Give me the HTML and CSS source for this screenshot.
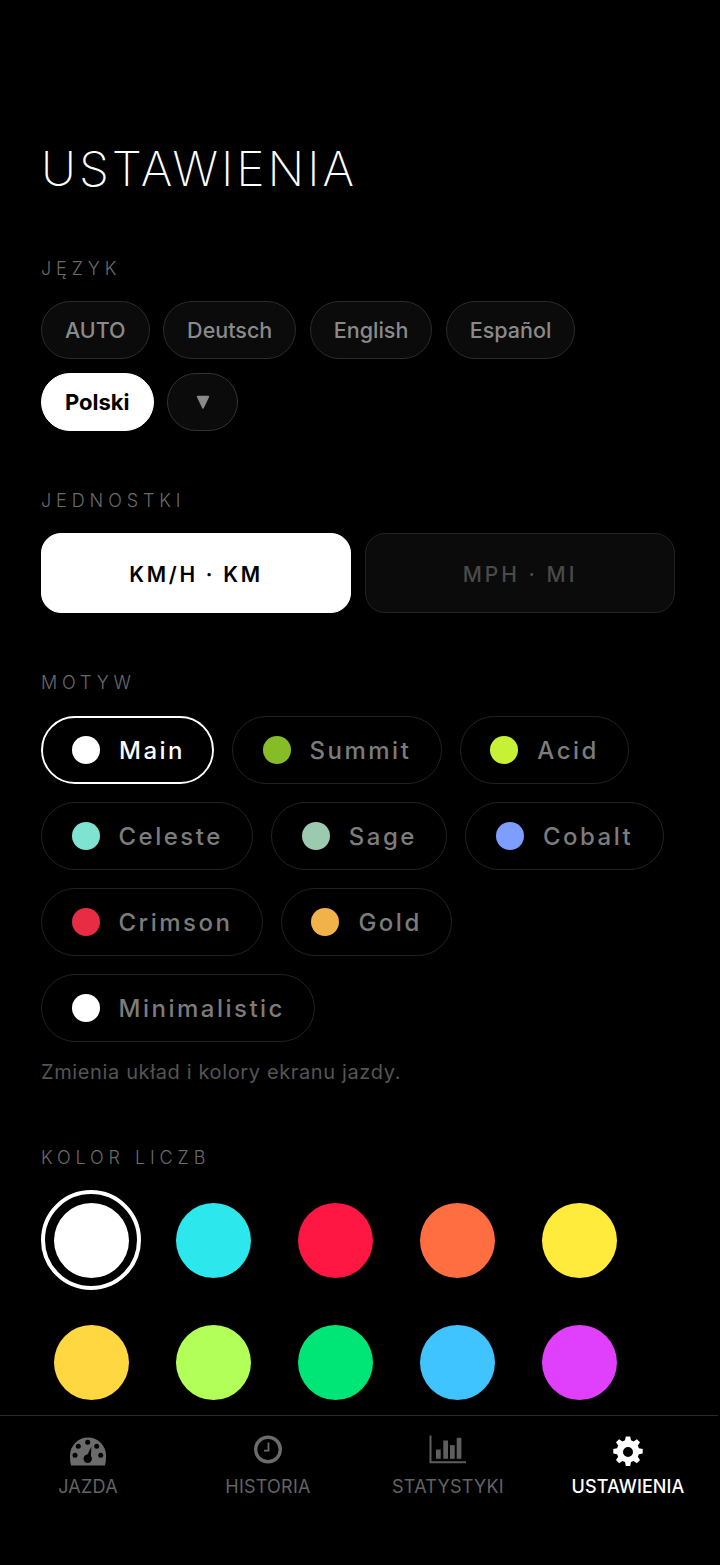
FILE: index.html
```html
<!DOCTYPE html>
<html lang="pl">
<head>
<meta charset="utf-8">
<title>Ustawienia</title>
<link rel="stylesheet" href="styles.css">
</head>
<body>
<div class="app">
  <main class="content">
    <h1 class="title">USTAWIENIA</h1>

    <section class="section section-lang">
      <h2 class="label">JĘZYK</h2>
      <div class="chips">
        <button class="chip">AUTO</button>
        <button class="chip">Deutsch</button>
        <button class="chip">English</button>
        <button class="chip">Español</button>
        <button class="chip chip-on">Polski</button>
        <button class="chip chip-more"><svg class="tri" viewBox="0 0 14 14"><path d="M1.6 1.6h10.8L7 13z" fill="#8a8a8a" stroke="#8a8a8a" stroke-width="1.6" stroke-linejoin="round"/></svg></button>
      </div>
    </section>

    <section class="section section-units">
      <h2 class="label">JEDNOSTKI</h2>
      <div class="units">
        <button class="unit unit-on">KM/H · KM</button>
        <button class="unit">MPH · MI</button>
      </div>
    </section>

    <section class="section section-theme">
      <h2 class="label">MOTYW</h2>
      <div class="themes">
        <button class="theme theme-on"><span class="dot dot-white"></span>Main</button>
        <button class="theme"><span class="dot dot-summit"></span>Summit</button>
        <button class="theme"><span class="dot dot-acid"></span>Acid</button>
        <button class="theme"><span class="dot dot-celeste"></span>Celeste</button>
        <button class="theme"><span class="dot dot-sage"></span>Sage</button>
        <button class="theme"><span class="dot dot-cobalt"></span>Cobalt</button>
        <button class="theme"><span class="dot dot-crimson"></span>Crimson</button>
        <button class="theme"><span class="dot dot-gold"></span>Gold</button>
        <button class="theme"><span class="dot dot-white"></span>Minimalistic</button>
      </div>
      <p class="hint">Zmienia układ i kolory ekranu jazdy.</p>
    </section>

    <section class="section section-color">
      <h2 class="label">KOLOR LICZB</h2>
      <div class="swatches">
        <span class="swatch swatch-on"><i class="c c-white"></i></span>
        <span class="swatch"><i class="c c-cyan"></i></span>
        <span class="swatch"><i class="c c-red"></i></span>
        <span class="swatch"><i class="c c-orange"></i></span>
        <span class="swatch"><i class="c c-yellow"></i></span>
        <span class="swatch"><i class="c c-amber"></i></span>
        <span class="swatch"><i class="c c-lime"></i></span>
        <span class="swatch"><i class="c c-green"></i></span>
        <span class="swatch"><i class="c c-blue"></i></span>
        <span class="swatch"><i class="c c-purple"></i></span>
      </div>
    </section>
  </main>

  <nav class="tabs">
    <a class="tab">
      <svg class="icon" viewBox="0 0 40 32">
        <path fill="#6b6b6b" d="M3.200 30.500C2.400 28.500 2 26 2 20.500A18 18 0 0 1 38 20.500C38 26 37.600 28.500 36.800 30.500Z"/>
        <g fill="#000"><circle cx="7" cy="20.200" r="2.500"/><circle cx="10.300" cy="11.200" r="2.500"/><circle cx="19.700" cy="7.200" r="2.500"/><circle cx="28.700" cy="11.200" r="2.500"/><circle cx="32.700" cy="20.200" r="2.500"/><circle cx="19.700" cy="23.800" r="4.200"/><path d="M23.400 11.500L22.800 23H17.800Z"/></g>
      </svg>
      <span>JAZDA</span>
    </a>
    <a class="tab">
      <svg class="icon" viewBox="0 0 40 32">
        <circle cx="20" cy="14.500" r="12.300" fill="none" stroke="#6b6b6b" stroke-width="3.400"/>
        <path d="M20.500 7.500V15.700H16" fill="none" stroke="#6b6b6b" stroke-width="1.800"/>
      </svg>
      <span>HISTORIA</span>
    </a>
    <a class="tab">
      <svg class="icon" viewBox="0 0 40 32">
        <path d="M2.500 .5V27.200H38" fill="none" stroke="#5e5e5e" stroke-width="2"/>
        <g fill="#5e5e5e"><rect x="8" y="14.500" width="4.700" height="9.300"/><rect x="15.300" y="5.500" width="4.700" height="18.300"/><rect x="22" y="10.200" width="4.700" height="13.600"/><rect x="28.700" y="2.800" width="4.700" height="21"/></g>
      </svg>
      <span>STATYSTYKI</span>
    </a>
    <a class="tab tab-on">
      <svg class="icon" viewBox="0 -1 40 32">
        <path fill="#fff" fill-rule="evenodd" d="M17.800 .5h4.400l.8 3.800 2.600 1.100 3.300-2.200 3.100 3.100-2.200 3.300 1.100 2.600 3.800.8v4.400l-3.800.8-1.100 2.600 2.200 3.300-3.100 3.100-3.300-2.200-2.600 1.100-.8 3.800h-4.400l-.8-3.800-2.600-1.100-3.300 2.200-3.100-3.100 2.200-3.300-1.100-2.600-3.800-.8v-4.400l3.800-.8 1.100-2.600-2.200-3.300 3.100-3.100 3.300 2.200 2.600-1.100zM20 11a5 5 0 1 0 0 10 5 5 0 0 0 0-10z"/>
      </svg>
      <span>USTAWIENIA</span>
    </a>
  </nav>
</div>
</body>
</html>
```

FILE: styles.css
```css
* { box-sizing: border-box; }
html, body { margin: 0; padding: 0; background: #000; }
body { font-family: Inter, "Noto Sans", sans-serif; color: #fff; }
button { font-family: inherit; padding: 0; cursor: pointer; }

.app { width: 720px; height: 1565px; display: flex; flex-direction: column; overflow: hidden; background: #000; }
.content { height: 1415px; padding: 140px 41px 0; overflow: hidden; flex: none; }

.title { margin: 0; font-size: 48px; line-height: 58px; font-weight: 150; letter-spacing: 3px; color: #fff; }

.label { margin: 0; font-size: 18px; line-height: 22px; font-weight: 300; letter-spacing: 4.900px; color: #6a6a6a; }

.section-lang { margin-top: 60px; }
.section-units { margin-top: 59px; }
.section-theme { margin-top: 59px; }
.section-color { margin-top: 63px; }

.chips { display: flex; flex-wrap: wrap; gap: 14px 13.500px; margin-top: 21px; width: 600px; }
.chip { height: 58px; padding: 0 23px; border-radius: 29px; border: 1.500px solid #2b2b2b; background: #0b0b0b; color: #8a8a8a; font-size: 21.500px; font-weight: 500; }
.chip-on { background: #fff; border-color: #fff; color: #000; font-size: 22px; font-weight: 700; }
.chip-more { width: 71px; display: flex; align-items: center; justify-content: center; padding: 0; border-color: #333; }
.tri { width: 14px; height: 14px; display: block; }

.units { display: grid; grid-template-columns: 310px 310px; gap: 14px; margin-top: 21px; }
.unit { height: 80px; padding-top: 2px; border-radius: 20px; border: 1.500px solid #242424; background: #0b0b0b; color: #4a4a4a; font-size: 21px; font-weight: 500; letter-spacing: 3px; }
.unit-on { background: #fff; border-color: #fff; color: #000; font-weight: 600; letter-spacing: 2.700px; }

.themes { display: flex; flex-wrap: wrap; gap: 18px; margin-top: 22px; }
.theme { height: 68px; padding: 0 29.500px; border-radius: 34px; border: 1.500px solid #222; background: #000; color: #7c7c7c; font-size: 24px; font-weight: 500; letter-spacing: 2.500px; display: flex; align-items: center; gap: 19px; }
.theme-on { border: 2px solid #fff; color: #fff; padding: 0 27px 0 29px; }
.dot { width: 28px; height: 28px; border-radius: 50%; flex: none; }
.dot-white { background: #fff; }
.dot-summit { background: #86bd27; }
.dot-acid { background: #c6f135; }
.dot-celeste { background: #7fe3d1; }
.dot-sage { background: #9ccab0; }
.dot-cobalt { background: #7d9dff; }
.dot-crimson { background: #e82c43; }
.dot-gold { background: #f2b24a; }

.hint { margin: 18px 0 0; font-size: 20px; line-height: 24px; letter-spacing: 0.630px; color: #555; }

.swatches { display: grid; grid-template-columns: repeat(5, 100px); gap: 22px; margin-top: 21px; }
.swatch { width: 100px; height: 100px; border-radius: 50%; display: flex; align-items: center; justify-content: center; border: 4px solid transparent; }
.swatch-on { border-color: #fff; }
.c { width: 75px; height: 75px; border-radius: 50%; display: block; flex: none; }
.c-white { background: #fff; }
.c-cyan { background: #2ce8ec; }
.c-red { background: #ff1744; }
.c-orange { background: #ff6e40; }
.c-yellow { background: #ffeb3b; }
.c-amber { background: #ffd740; }
.c-lime { background: #b2ff59; }
.c-green { background: #00e676; }
.c-blue { background: #40c4ff; }
.c-purple { background: #e040fb; }

.tabs { flex: none; width: 718px; height: 150px; border-top: 1.500px solid #2a2a2a; display: grid; grid-template-columns: repeat(4, 180px); }
.tab { display: flex; flex-direction: column; align-items: center; padding: 19px 4px 0 0; color: #636363; font-size: 18px; line-height: 22px; letter-spacing: 0.250px; }
.tab-on { color: #fff; font-weight: 500; letter-spacing: 0.100px; }
.icon { width: 40px; height: 32px; display: block; margin-bottom: 9px; }
```
